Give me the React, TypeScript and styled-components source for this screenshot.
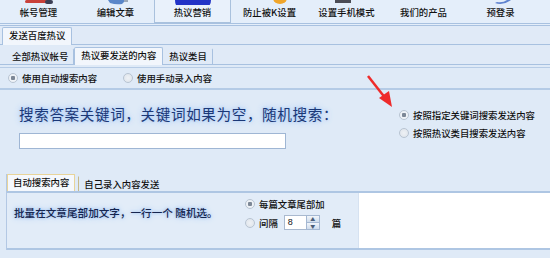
import React from "react";
import styled, { createGlobalStyle } from "styled-components";

const Global = createGlobalStyle`
  body {
    margin: 0;
    background: #dfeaf7;
    font-family: "Noto Sans CJK SC", "Liberation Sans", sans-serif;
    font-size: 9.4px;
    color: #111;
  }
`;

// only the bottom edge of each toolbar icon is visible in the window
const icons: React.ReactNode[] = [
  <>
    <rect x="6" y="0" width="26" height="3" rx="1.5" fill="#c9413a" />
    <rect x="26" y="0" width="8" height="4" rx="2" fill="#3b3f55" />
  </>,
  <>
    <path d="M12 0 L30 0 L26 4 Q20 5 14 3 Z" fill="#5a86c8" />
    <rect x="28" y="0" width="4" height="2" fill="#9aa7b8" />
  </>,
  <path d="M2 0 Q2 9 10 7 Q20 9 30 7 Q38 8 38 0 Z" fill="#2233c6" />,
  <ellipse cx="30" cy="-2" rx="7" ry="6" fill="#f0a52a" />,
  <rect x="8" y="0" width="16" height="3" fill="#4b4c55" />,
  null,
  <path d="M14 3 Q22 6 30 0 L26 0 Q22 3 16 2 Z" fill="#5f83cf" />,
];

const tools = ["帐号管理", "编辑文章", "热议营销", "防止被K设置", "设置手机模式", "我们的产品", "预登录"];

const App: React.FC = () => {
  return (
    <Page>
      <Global />
      <Toolbar>
        {tools.map((name, i) => (
          <ToolButton key={name} active={i === 2}>
            <IconClip>
              <svg width="40" height="8" viewBox="0 0 40 8">
                {icons[i]}
              </svg>
            </IconClip>
            <ToolLabel>{name}</ToolLabel>
          </ToolButton>
        ))}
      </Toolbar>

      <TabRow>
        <Tab active>发送百度热议</Tab>
      </TabRow>
      <TabRow pad={6}>
        <Tab>全部热议帐号</Tab>
        <Tab active>热议要发送的内容</Tab>
        <Tab>热议类目</Tab>
      </TabRow>

      <RadioBar>
        <RadioItem>
          <Radio checked />
          使用自动搜索内容
        </RadioItem>
        <RadioItem>
          <Radio />
          使用手动录入内容
        </RadioItem>
      </RadioBar>

      <SearchPanel>
        <LeftCol>
          <GlowTitle>搜索答案关键词，关键词如果为空，随机搜索：</GlowTitle>
          <KeywordInput />
        </LeftCol>
        <RightCol>
          <RadioItem>
            <Radio checked />
            按照指定关键词搜索发送内容
          </RadioItem>
          <RadioItem>
            <Radio />
            按照热议类目搜索发送内容
          </RadioItem>
        </RightCol>
        <Arrow width="30" height="34" viewBox="0 0 30 34">
          <line x1="2" y1="2" x2="20" y2="25" stroke="#ee2b2b" strokeWidth="2.5" />
          <polygon points="13,24 26,33 23,17" fill="#ee2b2b" />
        </Arrow>
      </SearchPanel>

      <BottomGroup>
        <SubTabRow>
          <SubTab active>自动搜索内容</SubTab>
          <SubTab>自己录入内容发送</SubTab>
        </SubTabRow>
        <BottomPanel>
          <AppendText>批量在文章尾部加文字，一行一个 随机选。</AppendText>
          <AppendOptions>
            <RadioItem>
              <Radio checked />
              每篇文章尾部加
            </RadioItem>
            <RadioItem>
              <Radio />
              间隔
              <Spin>
                <SpinValue>8</SpinValue>
                <SpinButtons>
                  <SpinBtn>▲</SpinBtn>
                  <SpinBtn>▼</SpinBtn>
                </SpinButtons>
              </Spin>
              <Unit>篇</Unit>
            </RadioItem>
          </AppendOptions>
          <TextArea />
        </BottomPanel>
      </BottomGroup>
    </Page>
  );
};
export default App;

const Page = styled.div`
  position: relative;
  width: 550px;
  height: 258px;
  overflow: hidden;
  background: #dfeaf7;
`;

const Toolbar = styled.div`
  display: flex;
  height: 23px;
  border-bottom: 3px double #a8c1e0;
  background: #e4eefa;
`;

const ToolButton = styled.div<{ active?: boolean }>`
  width: 77px;
  box-sizing: border-box;
  display: flex;
  flex-direction: column;
  align-items: center;
  border: 1px solid ${(p) => (p.active ? "#a9c1dd" : "transparent")};
  border-top: none;
  background: ${(p) => (p.active ? "#e9f1fb" : "transparent")};
`;

const IconClip = styled.div`
  height: 5px;
  overflow: hidden;
  line-height: 0;
`;

const ToolLabel = styled.div`
  font-size: 9.4px;
  font-weight: 500;
  line-height: 14px;
  color: #111;
`;

const TabRow = styled.div<{ pad?: number }>`
  display: flex;
  align-items: flex-end;
  height: 18px;
  padding-left: ${(p) => p.pad ?? 2}px;
  border-bottom: 1px solid #a8c1e0;
  margin-bottom: 1px;
  background: #e0eaf7;
`;

const Tab = styled.div<{ active?: boolean }>`
  box-sizing: border-box;
  padding: 0 ${(p) => (p.active ? 6 : 5)}px;
  line-height: 15px;
  font-size: 9.4px;
  font-weight: 500;
  border: 1px solid ${(p) => (p.active ? "#a8c1e0" : "transparent")};
  border-right-color: #a8c1e0;
  border-bottom: none;
  border-radius: 2px 2px 0 0;
  background: ${(p) => (p.active ? "#f2f6fc" : "transparent")};
  margin-bottom: ${(p) => (p.active ? "-1px" : "0")};
  height: ${(p) => (p.active ? "18px" : "16px")};
`;

const RadioBar = styled.div`
  display: flex;
  gap: 26px;
  height: 20px;
  align-items: center;
  padding-left: 8px;
  border-top: 1px solid #b7cce6;
  border-bottom: 2px solid #b4cbe6;
  margin-top: 2px;
`;

const RadioItem = styled.label`
  display: flex;
  align-items: center;
  gap: 4px;
  font-size: 9.4px;
  font-weight: 500;
  line-height: 14px;
  color: #111;
  white-space: nowrap;
`;

const Radio = styled.span<{ checked?: boolean }>`
  width: 8px;
  height: 8px;
  border-radius: 50%;
  border: 1px solid #b8c4d2;
  background: radial-gradient(
    circle,
    ${(p) => (p.checked ? "#7c8796 0 2px, #eef2f7 2.5px" : "#eef1f5 0, #dde3ea 100%")}
  );
`;

const SearchPanel = styled.div`
  position: relative;
  display: flex;
  height: 84px;
  padding-top: 14px;
  box-sizing: border-box;
`;

const LeftCol = styled.div`
  width: 365px;
  padding-left: 19px;
`;

const GlowTitle = styled.div`
  font-size: 14.6px;
  line-height: 20px;
  color: #1b3877;
  letter-spacing: 0.6px;
  white-space: nowrap;
  text-shadow: 0 0 3px #9fc3f3, 0 0 6px #b4d1f7, 0 0 8px #c8ddf9;
`;

const KeywordInput = styled.div`
  width: 267px;
  height: 16px;
  margin-top: 9px;
  box-sizing: border-box;
  border: 1px solid #9fb6d4;
  background: #fff;
`;

const RightCol = styled.div`
  display: flex;
  flex-direction: column;
  gap: 4px;
  padding-top: 4px;
  padding-left: 15px;
`;

const Arrow = styled.svg`
  position: absolute;
  left: 366px;
  top: -16px;
`;

const BottomGroup = styled.div`
  margin-left: 6px;
  border-left: 1px solid #b3c8e4;
`;

const SubTabRow = styled.div`
  display: flex;
  align-items: flex-end;
  height: 17px;
  border-bottom: 2px solid #aec6e3;
`;

const SubTab = styled.div<{ active?: boolean }>`
  height: ${(p) => (p.active ? "17px" : "15px")};
  box-sizing: border-box;
  padding: 0 5px;
  line-height: 15px;
  font-size: 9.4px;
  font-weight: 500;
  border: 1px solid ${(p) => (p.active ? "#e8d49a" : "transparent")};
  border-bottom: none;
  border-left-color: ${(p) => (p.active ? "#e8d49a" : "#c7b98a")};
  background: ${(p) => (p.active ? "#f5f8fd" : "transparent")};
  margin-right: 3px;
`;

const BottomPanel = styled.div`
  display: flex;
  height: 55px;
  border-bottom: 2px solid #aec6e3;
  background: #e2ecf8;
`;

const AppendText = styled.div`
  width: 231px;
  padding: 13px 0 0 7px;
  font-size: 10.6px;
  font-weight: 500;
  line-height: 14px;
  color: #16264f;
  white-space: nowrap;
  text-shadow: 0 0 3px #8db6ee, 0 0 6px #aacbf4;
`;

const AppendOptions = styled.div`
  width: 113px;
  display: flex;
  flex-direction: column;
  gap: 4px;
  padding-top: 4px;
`;

const Spin = styled.div`
  display: flex;
  align-items: stretch;
  height: 13px;
  width: 34px;
  margin-left: 2px;
  border: 1px solid #a9b9cf;
  background: #fff;
`;

const SpinValue = styled.div`
  flex: 1;
  font-family: "Liberation Sans", sans-serif;
  font-size: 9px;
  font-weight: 400;
  line-height: 13px;
  padding-left: 3px;
`;

const SpinButtons = styled.div`
  display: flex;
  flex-direction: column;
  width: 13px;
`;

const SpinBtn = styled.div`
  flex: 1;
  font-size: 5px;
  line-height: 6px;
  text-align: center;
  color: #4a5d78;
  background: linear-gradient(#f2f6fb, #cfdcec);
  border: 1px solid #a5b8d2;
  margin: -1px -1px 0 0;
`;

const Unit = styled.span`
  margin-left: 8px;
`;

const TextArea = styled.div`
  flex: 1;
  background: #fff;
  border-left: 1px solid #d6e2f1;
`;
